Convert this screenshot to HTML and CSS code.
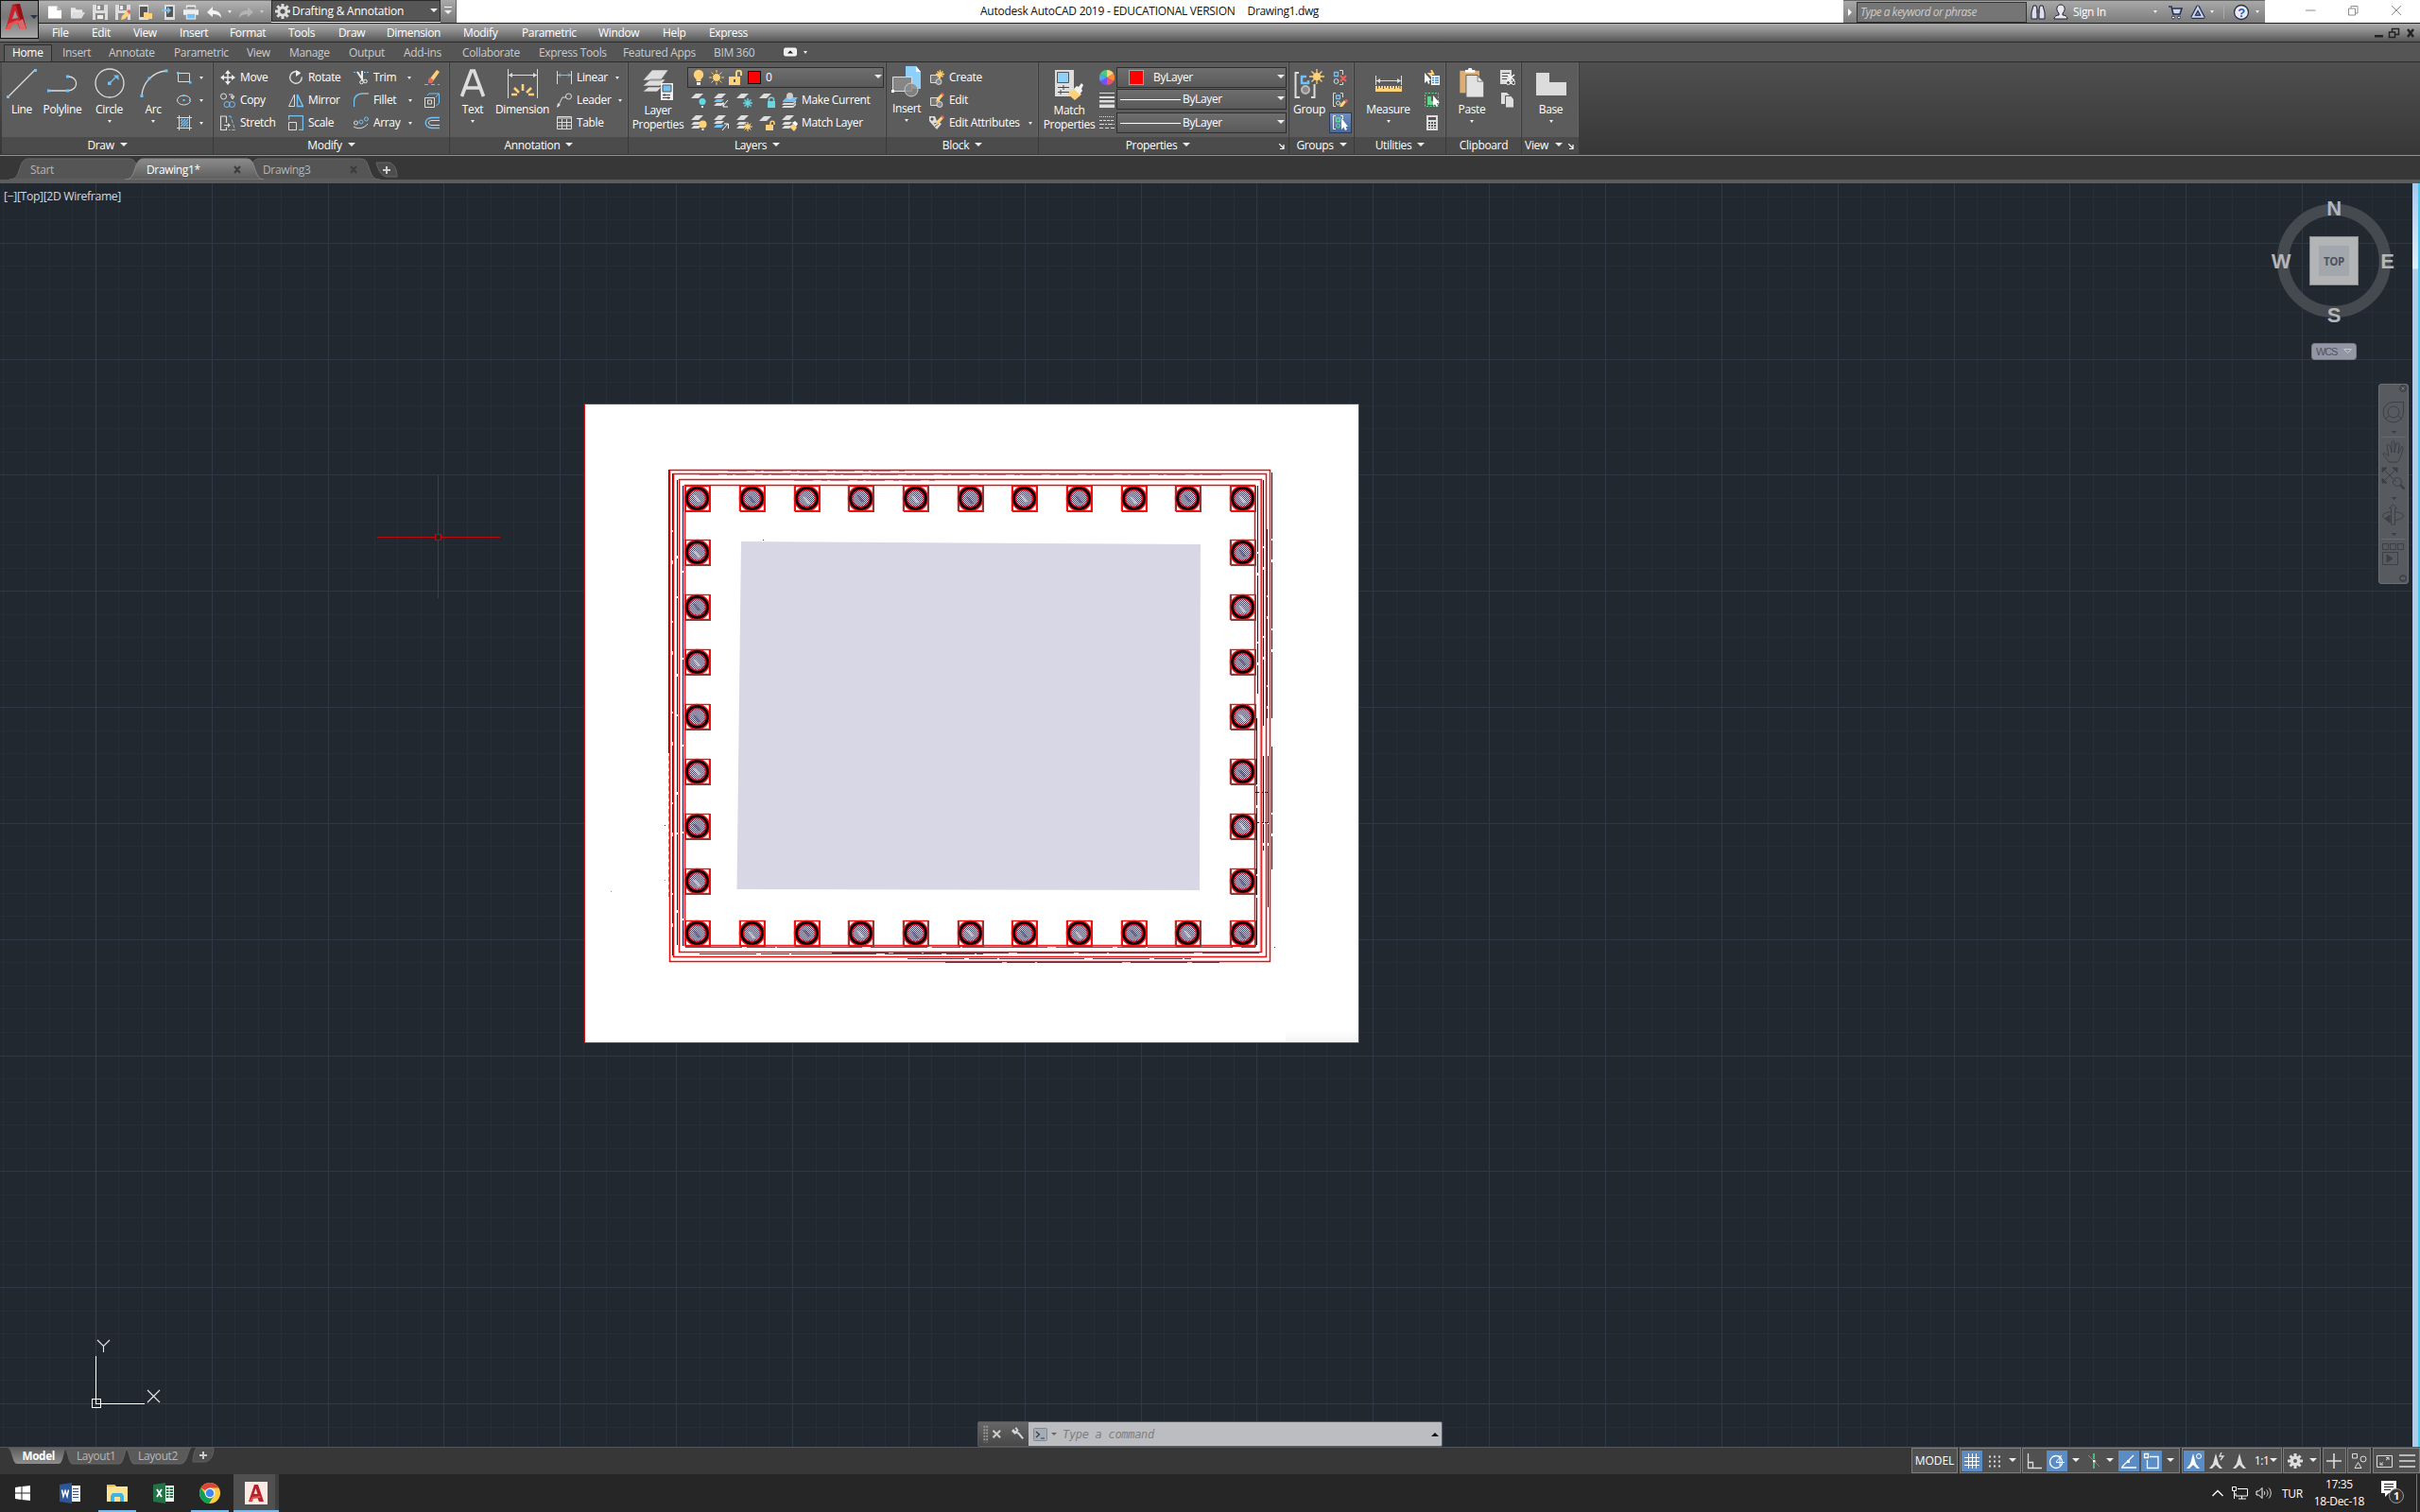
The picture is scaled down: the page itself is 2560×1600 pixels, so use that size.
FILE: index.html
```html
<!DOCTYPE html>
<html lang="en">
<head>
<meta charset="utf-8">
<title>Autodesk AutoCAD 2019 - Drawing1.dwg</title>
<link rel="stylesheet" href="styles.css">
</head>
<body>
<div class="app">
  <header class="top">
    <button class="appbtn">
      <svg width="24" height="30" viewBox="0 0 24 30"><path d="M1 28 8 2l8-1 7 27h-7l-3-8-6 1-1 7z" fill="#c8232c"/><path d="M8 2l8-1 7 27-4-2L12 3z" fill="#8f1219"/><path d="M8 17l3-9 3 8z" fill="#9b9b9b"/><path d="M1 28l3-6 10-4 2 3-8 2-2 5z" fill="#e2574f"/><path d="M16 28l-2-8 5-3 4 11z" fill="#d66"/></svg>
      <i class="caret navy"></i>
    </button>
    <div class="toprows">
      <div class="titlebar">
        <div class="qat">
          <svg width="16" height="16" viewBox="0 0 17 16"><path d="M1 1h10l5 5v9H1z" fill="#fff"/><path d="M11 1v5h5" fill="#aaa"/></svg>
          <svg width="16" height="16" viewBox="0 0 17 16"><path d="M1 15V3h5l1 2h7v3H5z" fill="#e8e8e8"/><path d="M5 8h12l-4 7H1z" fill="#ddd"/></svg>
          <svg width="16" height="16" viewBox="0 0 16 16"><path d="M0 0h16v16H0z" fill="#dcdcdc"/><path d="M4 0h8v6H4zM3 9h10v7H3z" fill="#8a8a8a"/><path d="M5 1h3v4H5zM5 11h6v4H5z" fill="#eee"/></svg>
          <svg width="16" height="16" viewBox="0 0 16 16"><path d="M0 0h16v16H0z" fill="#dcdcdc"/><path d="M4 0h8v6H4zM3 9h10v7H3z" fill="#8a8a8a"/><path d="M5 1h3v4H5z" fill="#eee"/><path d="M7 12l6-6 3 3-6 6-4 1z" fill="#ffd27a"/><path d="M12 7l2-2 2 1v3l-1 1z" fill="#f0605c"/></svg>
          <svg width="16" height="16" viewBox="0 0 16 16"><path d="M1 0h10v16H1z" fill="#ddd"/><path d="M2 2h8v11H2z" fill="#555"/><path d="M6 8h4l1 1h4v6H6z" fill="#ffd27a"/></svg>
          <svg width="16" height="16" viewBox="0 0 16 16"><path d="M4 0h11v16H4z" fill="#ddd"/><path d="M6 2h7v11H6z" fill="#555"/><path d="M1 5h6V2l4 4-4 4V7H1z" fill="#72c2f8"/></svg>
          <svg width="16" height="16" viewBox="0 0 17 16"><path d="M3 0h11v4H3zM0 5h17v6H0z" fill="#eee"/><path d="M4 2h9v2H4z" fill="#888"/><path d="M3 9h11v7H3z" fill="#eee"/><path d="M4 10h9v5H4z" fill="#72c2f8"/></svg>
          <svg width="17" height="16" viewBox="0 0 17 16"><path d="M7 2v4c6 0 9 3 9 8-2-3-4-4-9-4v3L1 8z" fill="#f2f2f2"/></svg>
          <i class="caret"></i>
          <svg width="17" height="16" viewBox="0 0 17 16"><path d="M10 2v4c-6 0-9 3-9 8 2-3 4-4 9-4v3l6-5z" fill="#b5b5b5"/></svg>
          <i class="caret dim"></i>
        </div>
        <div class="workspace">
          <svg width="16" height="16" viewBox="0 0 16 16"><circle cx="8" cy="8" r="4" fill="none" stroke="#ddd" stroke-width="3"/><path d="M8 0v16M0 8h16M2.3 2.3l11.4 11.4M13.700 2.300 2.300 13.700" stroke="#ddd" stroke-width="3"/><circle cx="8" cy="8" r="2.600" fill="#555"/></svg>
          <span>Drafting &amp; Annotation</span><i class="caret big"></i>
        </div>
        <div class="qatmore"><b></b><i class="caret big"></i></div>
        <div class="wintitle"><span>Autodesk AutoCAD 2019 - EDUCATIONAL VERSION</span><span>Drawing1.dwg</span></div>
        <div class="info">
          <i class="play"></i>
          <div class="search">Type a keyword or phrase</div>
          <svg class="bino" width="16" height="16" viewBox="0 0 16 16"><path d="M3 1h3l1 4v10H1V8zM10 1h3l2 7v7H9V5z" fill="#dde" stroke="#1d2330"/><path d="M6 5h4v4H6z" fill="#556"/></svg>
          <svg class="person" width="16" height="17" viewBox="0 0 16 17"><path d="M1 16c0-3 3-4 5-4v-2C2 6 4 1 8 1s6 5 2 9v2c2 0 5 1 5 4z" fill="#e8e8ee" stroke="#1d2330"/></svg>
          <span class="signin">Sign In</span><i class="caret"></i>
          <svg class="cart" width="16" height="16" viewBox="0 0 16 16"><path d="M1 2h3l2 8h7l2-6H5" fill="#d5d8e2" stroke="#223058" stroke-width="1.600"/><circle cx="6" cy="13.500" r="1.500" fill="#fff" stroke="#223058"/><circle cx="12" cy="13.500" r="1.500" fill="#fff" stroke="#223058"/></svg>
          <svg class="ax" width="16" height="16" viewBox="0 0 16 16"><path d="M8 2.500l5.500 10.500h-11z" fill="#dfe4f3" stroke="#223058" stroke-width="4" stroke-linejoin="round"/><path d="M8 3l5.200 9.800H2.800z" fill="none" stroke="#cdd5ee" stroke-width="2"/><path d="M8 7l2.500 4h-5z" fill="#8a8c92" stroke="#223058"/></svg>
          <i class="caret"></i><em></em>
          <svg class="help" width="18" height="18" viewBox="0 0 18 18"><circle cx="9" cy="9" r="7.500" fill="#e8ecf4" stroke="#2a3248" stroke-width="1.300"/><text x="9" y="13.500" text-anchor="middle" class="qm">?</text></svg>
          <i class="caret"></i>
        </div>
        <div class="winbtns"><svg width="102" height="12" viewBox="0 0 102 12"><path d="M0 6h10.500M45.500 4h7v7h-7zM48 4V1.500h7V9h-2.500M91 1l10 10M101 1 91 11" fill="none" stroke="#8c8c8c"/></svg></div>
      </div>
      <nav class="menubar">
        <span style="width:42px">File</span><span style="width:44px">Edit</span><span style="width:49px">View</span><span style="width:53px">Insert</span><span style="width:62px">Format</span><span style="width:53px">Tools</span><span style="width:51px">Draw</span><span style="width:81px">Dimension</span><span style="width:62px">Modify</span><span style="width:81px">Parametric</span><span style="width:68px">Window</span><span style="width:49px">Help</span><span>Express</span>
        <svg class="docbtns" width="44" height="12" viewBox="0 0 44 12"><path d="M0 8h9v2.500H0z" fill="#222"/><path d="M15.500 5h6v5.500h-6zM18.500 5V1.500h7V7.500h-4" fill="none" stroke="#222" stroke-width="1.500"/><path d="M35 2l6 8M41 2l-6 8" stroke="#222" stroke-width="2.500"/></svg>
      </nav>
    </div>
  </header>
  <nav class="rtabs">
    <span class="on">Home</span><span style="width:49px">Insert</span><span style="width:69px">Annotate</span><span style="width:77px">Parametric</span><span style="width:45px">View</span><span style="width:63px">Manage</span><span style="width:58px">Output</span><span style="width:62px">Add-ins</span><span style="width:81px">Collaborate</span><span style="width:89px">Express Tools</span><span style="width:96px">Featured Apps</span><span style="width:74px">BIM 360</span>
    <svg width="14" height="10" viewBox="0 0 14 10"><rect x=".5" y="1" width="13" height="8" rx="1.500" fill="#eee" stroke="#fff"/><path d="M4 6.500l3-3 3 3z" fill="#222"/></svg><i class="caret"></i>
  </nav>
  <section class="ribbon">
    <div class="panel p-draw">
      <div class="body">
        <div class="big"><svg width="32" height="32" viewBox="0 0 32 32"><path d="M2 30 30 2" stroke="#ddd" stroke-width="1.300"/><path d="M0 29h3v3H0zM29 1h3v3h-3z" fill="#72c2f8"/></svg><span>Line</span></div>
        <div class="big"><svg width="32" height="32" viewBox="0 0 32 32"><path d="M2 24h20c12-1 11-15 0-15" fill="none" stroke="#ddd" stroke-width="1.300"/><path d="M0 22.500h3v3H0zM20 22.500h3v3h-3zM20 7.500h3v3h-3z" fill="#72c2f8"/></svg><span>Polyline</span></div>
        <div class="big"><svg width="32" height="32" viewBox="0 0 32 32"><circle cx="16" cy="16" r="15" fill="none" stroke="#ddd" stroke-width="1.300"/><path d="M16 16l7-7" stroke="#72c2f8" stroke-width="1.300"/><path d="M14 14.500h3.500V18H14zM20 7.500h5.500V13z" fill="#72c2f8"/></svg><span>Circle</span><i class="caret"></i></div>
        <div class="big"><svg width="32" height="32" viewBox="0 0 32 32"><path d="M4 29C5 15 16 4 30 3" fill="none" stroke="#ddd" stroke-width="1.300"/><path d="M2.500 28h3v3h-3zM10.500 9.500h3v3h-3zM28.500 1.500h3v3h-3z" fill="#72c2f8"/></svg><span>Arc</span><i class="caret"></i></div>
        <b></b>
        <div class="sm"><svg width="16" height="16" viewBox="0 0 16 16"><path d="M1.500 3.500h12v9h-12z" fill="none" stroke="#ddd"/><path d="M0 2h2.500v2.500H0zM13 12h2.500v2.500H13z" fill="#72c2f8"/></svg><i class="caret"></i></div>
        <div class="sm"><svg width="16" height="16" viewBox="0 0 16 16"><ellipse cx="7.500" cy="8" rx="7" ry="5" fill="none" stroke="#ddd"/><path d="M6.500 2h2v2h-2zM6.500 7h2v2h-2zM13 7h2v2h-2z" fill="#72c2f8"/></svg><i class="caret"></i></div>
        <div class="sm"><svg width="16" height="16" viewBox="0 0 16 16"><path d="M0 2.500h16M0 13.500h16M2.500 0v16M13.500 0v16" stroke="#ddd"/><path d="M4 9l5-5M4 12l8-8M7 12l5-5M10 12l2-2M4 6l2-2" stroke="#72c2f8" stroke-width="1.300"/></svg><i class="caret"></i></div>
      </div>
      <div class="ptitle"><span>Draw</span><i class="caret big"></i></div>
    </div>
    <div class="panel p-modify">
      <div class="body">
        <div class="sm"><svg width="16" height="16" viewBox="0 0 16 16"><path d="M8 2v12M2 8h12" stroke="#eee" stroke-width="1.400"/><path d="M8 0l3 4H5zM8 16l3-4H5zM0 8l4-3v6zM16 8l-4-3v6z" fill="#eee"/></svg><span>Move</span></div>
        <div class="sm"><svg width="16" height="16" viewBox="0 0 16 16"><circle cx="3.500" cy="4" r="3" fill="none" stroke="#ddd"/><path d="M9 2h4v4M11 4l2 3 2-3z" fill="none" stroke="#ddd"/><circle cx="7" cy="12.500" r="3" fill="none" stroke="#72c2f8"/><circle cx="12.500" cy="12.500" r="3" fill="none" stroke="#72c2f8"/></svg><span>Copy</span></div>
        <div class="sm"><svg width="16" height="16" viewBox="0 0 16 16"><path d="M6.500 1v0h-6v14.500h6v-3M4 10.500h6M6.500 1v7" fill="none" stroke="#ddd" stroke-width="1.200"/><path d="M8 8l3 2.500L8 13z" fill="#ddd"/><path d="M9 1h2l4.500 14.500H9" fill="none" stroke="#72c2f8" stroke-dasharray="4 1.500"/></svg><span>Stretch</span></div>
        <div class="sm"><svg width="16" height="16" viewBox="0 0 16 16"><path d="M12.500 3.500a6.300 6.300 0 1 0 1.800 4" fill="none" stroke="#ddd" stroke-width="1.400"/><path d="M8 0l5 3.500L8 7z" fill="#eee"/></svg><span>Rotate</span></div>
        <div class="sm"><svg width="16" height="16" viewBox="0 0 16 16"><path d="M6.500 2v12.500h-6z" fill="none" stroke="#ddd"/><path d="M9.500 2v12.500h6z" fill="none" stroke="#72c2f8" stroke-width="1.500"/></svg><span>Mirror</span></div>
        <div class="sm"><svg width="16" height="16" viewBox="0 0 16 16"><path d="M.5 7.500h8v8h-8z" fill="none" stroke="#ddd"/><path d="M.5 5V.500h15v15H11" fill="none" stroke="#72c2f8" stroke-width="1.400"/></svg><span>Scale</span></div>
        <div class="sm" style="width:61px"><svg width="16" height="16" viewBox="0 0 16 16"><path d="M0 2.500h5M11 2.500h5" stroke="#72c2f8" stroke-dasharray="2 1"/><path d="M4 2l6 9M9 1v10" stroke="#eee" stroke-width="2"/><circle cx="8.500" cy="13" r="1.800" fill="none" stroke="#eee"/><circle cx="12.500" cy="12" r="1.800" fill="none" stroke="#eee"/></svg><span>Trim</span><i class="caret"></i></div>
        <div class="sm" style="width:62px"><svg width="16" height="16" viewBox="0 0 16 16"><path d="M.5 15V10C.5 5 3 1.500 9 1" fill="none" stroke="#72c2f8" stroke-width="1.300"/><path d="M9 1h7" stroke="#ddd"/></svg><span>Fillet</span><i class="caret"></i></div>
        <div class="sm" style="width:62px"><svg width="16" height="16" viewBox="0 0 16 16"><circle cx="2.500" cy="8" r="2" fill="none" stroke="#ddd"/><circle cx="8" cy="7" r="2" fill="none" stroke="#72c2f8"/><circle cx="13.500" cy="4" r="2" fill="none" stroke="#72c2f8"/><path d="M0 12c5 3 11 2 15-3" fill="none" stroke="#ddd"/></svg><span>Array</span><i class="caret"></i></div>
        <div class="sm"><svg width="16" height="16" viewBox="0 0 16 16"><path d="M6 9l7-9 3 2-7 10z" fill="#ffd27a"/><path d="M4 10l2-2 4 3-2 3H4z" fill="#f0605c"/><path d="M0 15.500h16" stroke="#72c2f8" stroke-dasharray="4 3"/></svg></div>
        <div class="sm"><svg width="16" height="16" viewBox="0 0 16 16"><path d="M.5 5.500h10v10H.5zM3.500 8h4v4h-4z" fill="none" stroke="#ddd"/><path d="M3 3l2-2h10.500v10l-3 3M12 5l3-4" fill="none" stroke="#72c2f8"/></svg></div>
        <div class="sm"><svg width="16" height="16" viewBox="0 0 16 16"><path d="M16 2.500H8C-1 3-1 13 8 13.500h8" fill="none" stroke="#72c2f8" stroke-width="1.400"/><path d="M16 5.500H8c-5 0-5 5 0 5h8" fill="none" stroke="#ddd"/></svg></div>
      </div>
      <div class="ptitle"><span>Modify</span><i class="caret big"></i></div>
    </div>
    <div class="panel p-anno">
      <div class="body">
        <div class="big"><svg width="32" height="32" viewBox="0 0 32 32"><path d="M4.500 30 14.500 3h3l10 27M8.500 21h15" fill="none" stroke="#ddd" stroke-width="3.600"/></svg><span>Text</span><i class="caret"></i></div>
        <div class="big"><svg width="32" height="32" viewBox="0 0 32 32"><path d="M.5 1v31M31.500 1v31M1 7.500h30" stroke="#ddd"/><path d="M1 7.500l4-2.500v5zM31 7.500l-4-2.500v5z" fill="#ddd"/><path d="M4 28h6M7 21l5 5M16 17v7M25 21l-5 5M28 28h-6" stroke="#ffd27a" stroke-width="2.600"/></svg><span>Dimension</span></div>
        <b></b>
        <div class="sm" style="width:66px"><svg width="16" height="16" viewBox="0 0 16 16"><path d="M.5 1v14M15.500 1v14" stroke="#ddd"/><path d="M1 5.500h14M4 3.500l-2 2 2 2M12 3.500l2 2-2 2" fill="none" stroke="#72c2f8"/></svg><span>Linear</span><i class="caret"></i></div>
        <div class="sm" style="width:69px"><svg width="16" height="16" viewBox="0 0 16 16"><path d="M1 15 6 5h4" fill="none" stroke="#ddd"/><circle cx="12.500" cy="4" r="3" fill="none" stroke="#ddd"/><path d="M0 16l1-5 3 2z" fill="#ddd"/></svg><span>Leader</span><i class="caret"></i></div>
        <div class="sm"><svg width="16" height="16" viewBox="0 0 16 16"><path d="M.5 1.500h15v13H.5zM0 3h16M0 7.500h16M0 11h16M5.500 4v11M10.500 4v11" fill="none" stroke="#ddd"/></svg><span>Table</span></div>
      </div>
      <div class="ptitle"><span>Annotation</span><i class="caret big"></i></div>
    </div>
    <div class="panel p-layers">
      <div class="body">
        <div class="big two"><svg width="32" height="34" viewBox="0 0 32 34"><path d="M0 24l6-5h14l-5 5zM0 18l8-7h16l-6 7zM0 12 10 1h17l-8 11z" fill="#ddd" stroke="#5c5c5c" stroke-width=".6"/><path d="M19 15h13v18H19z" fill="#f2f2f2"/><path d="M21 17h9v7h-9z" fill="#72c2f8" stroke="#555"/><path d="M21 27.500h8M21 30.500h8M23 26v3M27 29v3" stroke="#444"/></svg><span>Layer<br>Properties</span></div>
        <div class="combo layer">
          <svg width="12" height="18" viewBox="0 0 12 18"><circle cx="6" cy="6" r="5.200" fill="#ffd27a"/><path d="M3.500 9h5v4h-5z" fill="#ffd27a"/><path d="M4 14h4v3H4z" fill="#eee"/></svg>
          <svg width="16" height="16" viewBox="0 0 16 16"><path d="M8 0v16M0 8h16M2.500 2.500l11 11M13.500 2.500l-11 11" stroke="#ffd27a"/><circle cx="8" cy="8" r="4.500" fill="#ffd27a" stroke="#5c5c5c"/></svg>
          <svg width="15" height="17" viewBox="0 0 15 17"><path d="M0 7h12v9H0z" fill="#ffd27a"/><path d="M8 7V3c0-3 5-3 5 0v3" fill="none" stroke="#ffd27a" stroke-width="2"/><path d="M5 10h2v3H5z" fill="#555"/></svg>
          <i class="chip"></i><span>0</span><i class="caret big"></i>
        </div>
        <div class="lrow">
          <svg width="17" height="17" viewBox="0 0 17 17"><path d="M0 6l5-5h8L8 6z" fill="#ddd"/><circle cx="12" cy="9.500" r="3.500" fill="#65d8e4"/><path d="M11 14h2v2h-2z" fill="#eee"/></svg>
          <svg width="17" height="17" viewBox="0 0 17 17"><path d="M0 6l5-5h8L8 6zM0 14l3-3h8l-3 3z" fill="#ddd"/><path d="M0 10l3-3h8l-3 3z" fill="#72c2f8"/><path d="M15 8l-5 6M10 10v5h5" fill="none" stroke="#fff"/></svg>
          <svg width="17" height="17" viewBox="0 0 17 17"><path d="M0 6l5-5h8L8 6z" fill="#ddd"/><path d="M12 6v10M7 11h10M8.500 7.500l7 7M15.500 7.500l-7 7" stroke="#65d8e4" stroke-width="1.500"/></svg>
          <svg width="17" height="17" viewBox="0 0 17 17"><path d="M0 6l5-5h8L8 6z" fill="#ddd"/><path d="M9 9h8v7H9z" fill="#65d8e4"/><path d="M10.500 9V7c0-2.500 5-2.500 5 0v2" fill="none" stroke="#65d8e4" stroke-width="1.500"/></svg>
          <svg width="17" height="17" viewBox="0 0 17 17"><path d="M1 9l4-4h12l-4 5H1z" fill="#72c2f8"/><circle cx="8.500" cy="3.500" r="3.500" fill="#ccc"/><path d="M0 13l2-2h10l3-3v2l-3 3zM0 16l2-2h10l3-3v2l-3 3z" fill="#ddd"/></svg>
          <span>Make Current</span>
        </div>
        <div class="lrow">
          <svg width="17" height="17" viewBox="0 0 17 17"><path d="M0 5l5-5h8L8 5zM0 10l3-3h8l-3 3zM0 14l3-3h8l-3 3z" fill="#ddd"/><circle cx="12.500" cy="9.500" r="4" fill="#ffd27a"/><path d="M11.500 14h2v2h-2z" fill="#eee"/></svg>
          <svg width="17" height="17" viewBox="0 0 17 17"><path d="M0 5l5-5h8L8 5zM0 9l3-3h8L8 9z" fill="#ddd"/><path d="M0 13l3-3h8l-3 3z" fill="#72c2f8"/><path d="M9 16l6-7M11 9h4.500v5" fill="none" stroke="#fff"/></svg>
          <svg width="17" height="17" viewBox="0 0 17 17"><path d="M0 5l5-5h8L8 5zM0 10l3-3h8l-3 3zM0 14l3-3h8l-3 3z" fill="#ddd"/><path d="M12 7v10M7 12h10M8.500 8.500l7 7M15.500 8.500l-7 7" stroke="#ffd27a"/><circle cx="12" cy="12" r="2.800" fill="#ffd27a"/></svg>
          <svg width="17" height="17" viewBox="0 0 17 17"><path d="M0 6l5-5h8L8 6z" fill="#ddd"/><path d="M7 10h8v6H7z" fill="#ffd27a"/><path d="M12 10V8c0-2.500 4-2.500 4 0v2" fill="none" stroke="#ffd27a" stroke-width="1.500"/></svg>
          <svg width="17" height="17" viewBox="0 0 17 17"><path d="M0 5l5-5h8L8 5zM0 10l3-3h8l-3 3zM0 14l3-3h8l-3 3z" fill="#ddd"/><path d="M8 12l4-3 4 4-3 4z" fill="#ffd27a"/><path d="M11 8l3-2 3 3-2 3z" fill="#fff"/></svg>
          <span>Match Layer</span>
        </div>
      </div>
      <div class="ptitle"><span>Layers</span><i class="caret big"></i></div>
    </div>
    <div class="panel p-block">
      <div class="body">
        <div class="big raised"><svg width="34" height="34" viewBox="0 0 34 34"><path d="M16 0h11l5 6v18H16z" fill="#8fd0fb"/><path d="M27 0v6h5" fill="#fff"/><path d="M2.500 11.500h20v15h-20z" fill="#868686" stroke="#ddd"/><path d="M1 25h3v3H1z" fill="#fff"/><circle cx="22" cy="25" r="7" fill="#8a8a8a" fill-opacity=".8" stroke="#ccc"/></svg><span>Insert</span><i class="caret"></i></div>
        <b></b>
        <div class="sm"><svg width="16" height="16" viewBox="0 0 16 16"><path d="M1.500 5.500h9v8h-9z" fill="#777" stroke="#ddd"/><circle cx="10" cy="12.500" r="3" fill="#888" stroke="#ddd"/><path d="M11.500 0v9M7 4.500h9M8.500 1.500l6 6M14.500 1.500l-6 6" stroke="#ffd27a" stroke-width="1.300"/></svg><span>Create</span></div>
        <div class="sm"><svg width="16" height="16" viewBox="0 0 16 16"><path d="M1.500 5.500h9v8h-9z" fill="#777" stroke="#ddd"/><circle cx="11" cy="12.500" r="3" fill="#888" stroke="#ddd"/><path d="M7 10l1-4 5-5 2 2-5 6z" fill="#ffd27a"/><path d="M12 1l2-1 2 2-1 2z" fill="#f0605c"/></svg><span>Edit</span></div>
        <div class="sm" style="width:109px"><svg width="16" height="16" viewBox="0 0 16 16"><path d="M0 1h6l2 5 5 3-5 6-8-9z" fill="#ddd"/><path d="M2 3h2v2H2zM5 9l3-1M6 12l4-3" stroke="#555" fill="#555"/><path d="M7 10l1-4 5-5 2 2-5 6z" fill="#ffd27a"/><path d="M12 1l2-1 2 2-1 2z" fill="#f0605c"/></svg><span>Edit Attributes</span><i class="caret"></i></div>
      </div>
      <div class="ptitle"><span>Block</span><i class="caret big"></i></div>
    </div>
    <div class="panel p-props">
      <div class="body">
        <div class="big two"><svg width="32" height="34" viewBox="0 0 32 34"><path d="M1 1h20v28H1z" fill="#ddd"/><path d="M3.500 3.500h12v11h-12z" fill="#8fd0fb" stroke="#555"/><path d="M4 19.500h12M4 24.500h12M10 17v5M7 22v5" stroke="#444"/><path d="M14 26l9-6 6 7-7 6z" fill="#ffd27a"/><path d="M21 21l3-3 2 1 3-4 2 2-2 4 1 2-3 4z" fill="#f2f2f2"/></svg><span>Match<br>Properties</span></div>
        <div class="sm"><svg width="16" height="16" viewBox="0 0 16 16"><path d="M8 8V0a8 8 0 0 1 7 4z" fill="#ffd27a"/><path d="M8 8l7-4a8 8 0 0 1 0 8z" fill="#ff8a3c"/><path d="M8 8l7 4a8 8 0 0 1-7 4z" fill="#f0506a"/><path d="M8 8v8a8 8 0 0 1-7-4z" fill="#7b4dff"/><path d="M8 8l-7 4a8 8 0 0 1 0-8z" fill="#48a8f0"/><path d="M8 8 1 4a8 8 0 0 1 7-4z" fill="#52c87a"/></svg></div>
        <div class="sm"><svg width="16" height="16" viewBox="0 0 16 16"><path d="M0 0h16v1H0zM0 4h16v2H0zM0 8h16v2.500H0zM0 12.500h16V16H0z" fill="#ddd"/></svg></div>
        <div class="sm"><svg width="16" height="16" viewBox="0 0 16 16"><path d="M0 1.500h16" stroke="#ddd" stroke-dasharray="1 1"/><path d="M0 5.500h16" stroke="#ddd" stroke-dasharray="3 1"/><path d="M0 9.500h16" stroke="#ddd" stroke-dasharray="5 1 2 1"/><path d="M0 13.500h16" stroke="#ddd" stroke-dasharray="4 2"/></svg></div>
        <div class="combo color"><i class="chip"></i><span>ByLayer</span><i class="caret big"></i></div>
        <div class="combo line c2"><i class="rule"></i><span>ByLayer</span><i class="caret big"></i></div>
        <div class="combo line c3"><i class="rule"></i><span>ByLayer</span><i class="caret big"></i></div>
      </div>
      <div class="ptitle shift"><span>Properties</span><i class="caret big"></i><svg class="launch" width="6" height="6" viewBox="0 0 6 6"><path d="M0 0l5 5M5 1v4.500H1" fill="none" stroke="#fff" stroke-width="1.200"/></svg></div>
    </div>
    <div class="panel p-groups">
      <div class="body">
        <div class="big"><svg width="32" height="32" viewBox="0 0 32 32"><path d="M5 5H1.500v26H6M18 31h3.500V17" fill="none" stroke="#ddd" stroke-width="2"/><path d="M13 9H8v7h7v-3" fill="none" stroke="#72c2f8" stroke-width="2.500"/><circle cx="12" cy="23" r="4" fill="#888" stroke="#bbb" stroke-width="2"/><path d="M24 1v16M16 9h16M18.500 3.500l11 11M29.500 3.500l-11 11" stroke="#ffd27a" stroke-width="1.300"/><circle cx="24" cy="9" r="4" fill="#ffd27a"/></svg><span>Group</span></div>
        <div class="sm"><svg width="16" height="16" viewBox="0 0 16 16"><path d="M1.500 2.500h4v4h-4z" fill="none" stroke="#72c2f8" stroke-width="1.300"/><circle cx="3.500" cy="12" r="2.400" fill="none" stroke="#ddd"/><path d="M7 .5h3.500V5M7 15.500h3.500V13" fill="none" stroke="#ddd"/><path d="M8 6l6 6M14 6l-6 6" stroke="#f0605c" stroke-width="2"/></svg></div>
        <div class="sm"><svg width="16" height="16" viewBox="0 0 16 16"><path d="M3 .5H.5v14H3M8 .5h2.500V5" fill="none" stroke="#ddd"/><path d="M3.500 3h4v3.500h-4z" fill="none" stroke="#72c2f8" stroke-width="1.300"/><circle cx="5.500" cy="11" r="2" fill="none" stroke="#ddd"/><path d="M7 15l1-3 4-4 2 2-4 5z" fill="#ffd27a"/><path d="M12 8l3-1 1 2-2 2z" fill="#f0605c"/></svg></div>
        <div class="sm act"><svg width="16" height="18" viewBox="0 0 16 18"><path d="M3 1.500H.5v14H3M8 1.500h2.500V5" fill="none" stroke="#eee"/><path d="M3.500 4h4v3.500h-4z" fill="none" stroke="#5fe08a" stroke-width="1.300"/><circle cx="5.500" cy="12" r="2" fill="none" stroke="#5fe08a"/><path d="M9 4v12l2.500-2.500L13 17l2-1-1.500-3H16z" fill="#fff"/></svg></div>
      </div>
      <div class="ptitle"><span>Groups</span><i class="caret big"></i></div>
    </div>
    <div class="panel p-utils">
      <div class="body">
        <div class="big"><svg width="30" height="32" viewBox="0 0 30 32"><path d="M1.500 8v10M28.500 8v10M2 13.500h26" stroke="#ddd"/><path d="M2 13.500l4-2.500v5zM28 13.500l-4-2.500v5z" fill="#ddd"/><path d="M1 19h28v6H1z" fill="#ffd27a"/><path d="M3.500 19v3M6.500 19v2M9.500 19v3M12.500 19v2M15.500 19v3M18.500 19v2M21.500 19v3M24.500 19v2M27 19v3" stroke="#555"/></svg><span>Measure</span><i class="caret"></i></div>
        <div class="sm c"><svg width="16" height="16" viewBox="0 0 16 16"><path d="M7 0l2 4H5l4 4" stroke="#ffd27a" stroke-width="2" fill="none"/><path d="M0 3v11l2.500-2.500L4 15l1.500-1L4.500 11H7z" fill="#fff"/><path d="M7 6h9v10H7z" fill="#fff"/><path d="M8 8.500h2M11 8.500h4M8 11h2M11 11h4M8 13.500h2M11 13.500h4" stroke="#3a8ad0" stroke-width="1.300"/></svg></div>
        <div class="sm c"><svg width="16" height="16" viewBox="0 0 16 16"><path d="M.5.500h14v14H.5z" fill="none" stroke="#5fd88a" stroke-dasharray="2 1.500"/><path d="M3 4h4v5h5v4H3z" fill="#5fd88a"/><path d="M9 3v11l2-2 1.500 3 1.500-1-1-3h3z" fill="#fff"/></svg></div>
        <div class="sm c"><svg width="12" height="16" viewBox="0 0 12 16"><path d="M0 0h12v16H0z" fill="#ddd"/><path d="M2 2h8v3H2zM2 7h2v2H2zM5 7h2v2H5zM8 7h2v2H8zM2 10h2v2H2zM5 10h2v2H5zM8 10h2v2H8zM2 13h2v1H2zM5 13h2v1H5zM8 13h2v1H8z" fill="#555"/></svg></div>
      </div>
      <div class="ptitle"><span>Utilities</span><i class="caret big"></i></div>
    </div>
    <div class="panel p-clip">
      <div class="body">
        <div class="big"><svg width="27" height="32" viewBox="0 0 28 34"><path d="M0 3h22v25H0z" fill="#dcae74"/><path d="M6 5V2h3l1-2h3l1 2h3v3z" fill="#fff"/><path d="M7 8h13l7 8v17H7z" fill="#e2e2e2" stroke="#5c5c5c"/><path d="M20 9v6h6z" fill="#fff" stroke="#555" stroke-width=".8"/></svg><span>Paste</span><i class="caret"></i></div>
        <div class="sm c"><svg width="16" height="16" viewBox="0 0 16 16"><path d="M0 0h12v15H0z" fill="#ddd"/><path d="M2 3.500h8M2 6.500h6M2 9.500h5" stroke="#555"/><path d="M8 5l7 6M15 5l-7 6" stroke="#fff" stroke-width="1.500"/><circle cx="8.500" cy="13.500" r="2" fill="#555" stroke="#fff"/><circle cx="14" cy="13.500" r="2" fill="#555" stroke="#fff"/></svg></div>
        <div class="sm c"><svg width="16" height="16" viewBox="0 0 16 16"><path d="M1 0h6l3 3v9H1z" fill="#ddd"/><path d="M5.500 3.500h6l3 3.500v9h-9z" fill="#ddd" stroke="#5c5c5c"/></svg></div>
      </div>
      <div class="ptitle"><span>Clipboard</span></div>
    </div>
    <div class="panel p-view">
      <div class="body">
        <div class="big"><svg width="32" height="32" viewBox="0 0 32 32"><path d="M0 5h14v10h18v14H0z" fill="#dcdcdc"/></svg><span>Base</span><i class="caret"></i></div>
      </div>
      <div class="ptitle"><span>View</span><i class="caret big"></i><svg class="launch in" width="6" height="6" viewBox="0 0 6 6"><path d="M0 0l5 5M5 1v4.500H1" fill="none" stroke="#fff" stroke-width="1.200"/></svg></div>
    </div>
  </section>
  <nav class="ftabs">
    <svg class="tabshapes" width="440" height="25" viewBox="0 0 440 25">
      <defs><linearGradient id="ta" x2="0" y2="1"><stop offset="0" stop-color="#8c8c8c"/><stop offset="1" stop-color="#5c5c5c"/></linearGradient></defs>
      <path d="M10 25c8 0 9-6 12-15 2-5 4-7 8-7h106c6 0 7 3 9 9 3 9 5 13 10 13z" fill="#555" stroke="#686868"/>
      <path d="M254 25c8 0 9-6 12-15 2-5 4-7 8-7h107c6 0 7 3 9 9 3 9 5 13 12 13z" fill="#555" stroke="#686868"/>
      <path d="M132 25c8 0 9-6 12-15 2-5 4-7 8-7h108c6 0 7 3 9 9 3 9 5 13 10 13z" fill="url(#ta)" stroke="#888"/>
      <path d="M398 7h14c6 2 8 9 8 15h-11c-6-1-9-7-11-15z" fill="#4d4d4d" stroke="#666"/><path d="M405 15h8M409 11v8" stroke="#ccc" stroke-width="2"/>
      <path d="M248 11l6 7M254 11l-6 7M371 11l6 7M377 11l-6 7" stroke="#3c3c3c" stroke-width="2"/>
    </svg>
    <div class="tablabels"><span style="width:123px">Start</span><span class="on" style="width:123px">Drawing1*</span><span>Drawing3</span></div>
  </nav>
  <main class="view">
    <svg class="scene" width="2552" height="1337" viewBox="0 194 2552 1337">
      <defs>
        <pattern id="hatch" width="2" height="2" patternUnits="userSpaceOnUse"><path d="M0 0h2v2H0z" fill="#e4e2f2"/><path d="M0 0h1v1H0zM1 1h1v1H1z" fill="#3c3c56"/></pattern>
        <linearGradient id="fade" x1="0" x2="0" y1="0" y2="1"><stop offset="0" stop-color="#fff"/><stop offset="1" stop-color="#f3f4f6"/></linearGradient>
      </defs>
      <g id="grid" shape-rendering="crispEdges"></g>
      <path d="M101.500 194v1291" stroke="#1e5128" shape-rendering="crispEdges"/><path d="M101 1485.500h2451" stroke="#6a2329" shape-rendering="crispEdges"/>
      <rect x="619" y="427" width="818" height="676" fill="#fff"/>
      <rect x="1360" y="1090" width="77" height="13" fill="url(#fade)"/>
      <rect x="618.500" y="427.500" width="819" height="676" fill="none" stroke="#d81010" shape-rendering="crispEdges"/>
      <path d="M784 573l486 3-1 366-489.500-1z" fill="#d8d7e5"/>
      <g fill="none" stroke="#14141e" shape-rendering="crispEdges">
        <path d="M707.500 497v300"/><path d="M707.500 800v150" stroke="#99a" stroke-dasharray="5 3"/>
        <path d="M711.500 501v510" stroke-dasharray="60 2 30 4"/><path d="M716.500 508v492" stroke-dasharray="80 3 40 2"/><path d="M722.500 514v487" stroke="#14143a" stroke-dasharray="90 2"/>
        <path d="M770 498.500h190M840 508.500h150M740 502.500h560" stroke="#b9a0b0" stroke-dasharray="20 9 6 3"/>
        <path d="M1345.500 500v260M1345.500 790v130M1340.500 560v200M1341.500 800v160M1336.500 508v260M1336.500 800v100M1330.500 514v220M1329.500 760v240" stroke-dasharray="70 2 20 3"/>
        <path d="M725 1002.500h603M880 1008.500h455M740 1009.500h300M960 1014.500h300M1000 1018.500h290" stroke="#445" stroke-dasharray="60 5 30 2 90 9"/>
        <path d="M1328 838.500h15M1328 870.500h15" stroke-dasharray="4 1"/>
      </g>
      <g fill="none" stroke="#ee0c0c" stroke-width="1.500">
        <rect x="708.500" y="497.500" width="635" height="520"/><rect x="712.500" y="501.500" width="627" height="511"/><rect x="718.500" y="507.500" width="616" height="500"/><rect x="724.500" y="513.500" width="603" height="487"/>
        <path d="M1333.500 508v499M725 1001.500h603" stroke="#ff7070"/>
      </g>
      <g id="columns"></g>
      <path d="M807 571h1v1h-1zM703 873h1v1h-1zM1348 1002h1v1h-1z" fill="#333"/><path d="M703 931h1v1h-1zM646 943h1v1h-1z" fill="#999"/>
      <path d="M399 568.500h62M467 568.500h62M463.500 503v62M463.500 571v62M460.500 565.500h6v6h-6z" fill="none" stroke="#c00a0a" shape-rendering="crispEdges"/>
      <path d="M101.500 1435v50.500h51M97.500 1480.500h9v9h-9z" fill="none" stroke="#fff" shape-rendering="crispEdges"/>
      <path d="M103 1418l6.500 6.500 6.500-6.500M109.500 1424v7M156 1471l13 13M169 1471l-13 13" fill="none" stroke="#e8e8e8" stroke-width="1.100"/>
      <text x="4" y="212" class="vplabel" textLength="124" lengthAdjust="spacingAndGlyphs">[−][Top][2D Wireframe]</text>
      <circle cx="2469" cy="276" r="54" fill="none" stroke="#454a51" stroke-width="12.500"/>
      <g class="compass"><text x="2469" y="227.500">N</text><text x="2469" y="340.500">S</text><text x="2413" y="284">W</text><text x="2525.500" y="284">E</text></g>
      <rect x="2443.500" y="250.500" width="51" height="51" fill="#b3b4b6" stroke="#8a8c8e"/><rect x="2453" y="260" width="32" height="32" fill="#a2a7ad"/>
      <text x="2469" y="280.500" class="cube" textLength="22" lengthAdjust="spacingAndGlyphs">TOP</text>
      <rect x="2445.500" y="363.500" width="47" height="17" rx="3" fill="#9496a5" stroke="#7b7d8c"/><text x="2450" y="375.500" class="wcs" textLength="23">WCS</text><path d="M2479.500 369.500h8l-4 4z" fill="none" stroke="#c4c6d0"/>
      <g fill="none" stroke="#3c4046">
        <rect x="2516.500" y="406.500" width="31" height="211" rx="2.500" fill="#575b5f" stroke="#6b6f72"/>
        <circle cx="2542" cy="411" r="3.500" fill="#484c50"/><path d="M2540.500 409.500l3 3M2543.500 409.500l-3 3" stroke="#777"/>
        <path d="M2532 425.500h10.500v11a10.700 10.700 0 1 1-10.500-11z"/><circle cx="2532" cy="436" r="6"/><path d="M2527.500 440l-4 3M2536.500 440l4 3"/>
        <path d="M2529.500 456h6l-3 3zM2529.500 526h6l-3 3zM2529.500 564h6l-3 3z" fill="#3c4046" stroke="none"/>
        <path d="M2519 462.500h26M2519 570.500h26" stroke="#686c70"/>
        <path d="M2527 489c-2-4-6-7-6-9 2-1 4 1 6 3l-2-12c2-2 3 0 4 3l1 5v-11c1-2 3-2 3 0v11l2-10c2-1 3 0 3 1l-1 10 3-7c1-1 3 0 2 2-2 6-3 11-6 14z"/>
        <path d="M2521 496l14 14M2535 496l-14 14"/><path d="M2520 495h5l-5 5zM2536 495v5l-5-5zM2520 511v-5l5 5z" fill="#3c4046"/><circle cx="2536" cy="510" r="4.500"/><path d="M2539.500 513.500l4 4" stroke-width="2.500"/>
        <ellipse cx="2531.500" cy="546" rx="11" ry="4.500"/><path d="M2529.500 555v-17h-2l4-4.500 4 4.500h-2v17z" fill="#575b5f"/><path d="M2528 545l-5 4 5 4z" fill="#3c4046"/>
        <path d="M2520.500 575.500h6v6h-6zM2528.500 575.500h6v6h-6zM2536.500 575.500h6v6h-6zM2520.500 584.500h16v13h-16z"/><path d="M2525 587v8l6-4z" fill="#3c4046"/>
        <circle cx="2542" cy="612" r="3.500" fill="#484c50"/><path d="M2540 612h4" stroke="#777"/>
      </g>
    </svg>
    <div class="edge"></div>
    <div class="cmd">
      <div class="cmdleft">
        <svg width="54" height="25" viewBox="0 0 54 26"><path d="M5.500 4v18M8.500 4v18" stroke="#999" stroke-width="2" stroke-dasharray="2 1.500"/><path d="M15 9l8 8M23 9l-8 8" stroke="#ccc" stroke-width="2.200"/><path d="M37 8c2 4 4 4 6 4l5 6M36 9l3 3 3-3-2-3" fill="none" stroke="#d4d8dc" stroke-width="2"/></svg>
      </div>
      <svg width="27" height="16" viewBox="0 0 27 16"><rect x=".5" y="1.500" width="14" height="13" rx="1" fill="#a6acb6" stroke="#808896"/><path d="M3 5l3.500 3L3 11M8 12h4" fill="none" stroke="#333c48" stroke-width="1.200"/><path d="M19 6h6l-3 3z" fill="#666"/></svg>
      <span>Type a command</span><i class="uparrow"></i>
    </div>
  </main>
  <footer class="status">
    <svg class="ltabs" width="240" height="20" viewBox="0 0 240 20">
      <defs><linearGradient id="tb" x2="0" y2="1"><stop offset="0" stop-color="#5c5c5c"/><stop offset="1" stop-color="#8e8e8e"/></linearGradient></defs>
      <path d="M68 0c4 2 4 15 8 17h50c5 0 5-13 9-17zM133 0c4 2 4 15 8 17h50c7 0 7-13 11-17z" fill="#5a5a5a" stroke="#666"/>
      <path d="M8 0c5 2 5 17 10 17h44c5 0 5-13 8-17z" fill="url(#tb)"/>
      <path d="M208 0h18c0 8-3 14-9 15h-13c0-5 1-10 4-15z" fill="#505050" stroke="#606060"/><path d="M211 8h8M215 4v8" stroke="#ccc" stroke-width="2"/>
      <text x="23.500" y="12.500" class="lt on" textLength="34.500" lengthAdjust="spacingAndGlyphs">Model</text><text x="81" y="12.500" class="lt" textLength="41.500" lengthAdjust="spacingAndGlyphs">Layout1</text><text x="146" y="12.500" class="lt" textLength="42" lengthAdjust="spacingAndGlyphs">Layout2</text>
    </svg>
    <div class="sboxes">
      <div class="sb s-model"><span>MODEL</span></div>
      <div class="sb s-grid"><i class="t"><svg width="18" height="18" viewBox="0 0 18 18"><path d="M5.500 1v16M9.500 1v16M13.500 1v16M1 5.500h16M1 9.500h16M1 13.500h16" stroke="#fff"/></svg></i><svg class="ic" width="18" height="14" viewBox="0 0 18 14"><path d="M3 2.500h14M3 7.500h14M3 12.500h14" stroke="#ddd" stroke-width="2" stroke-dasharray="2 3"/></svg><u class="caret big"></u></div>
      <div class="sb s-draft"><svg width="16" height="18" viewBox="0 0 16 18"><path d="M1.500 1v15.500H16M2 10.500h4.500V16" fill="none" stroke="#ddd" stroke-width="1.300"/></svg><i class="t"><svg width="18" height="18" viewBox="0 0 18 18"><circle cx="8" cy="10" r="6.500" fill="none" stroke="#fff" stroke-width="1.300"/><path d="M8 10.500h9M8 10l6-7M12 3.500V14" fill="none" stroke="#fff"/></svg></i><u class="caret big"></u><svg width="16" height="16" viewBox="0 0 16 16"><path d="M2 2l12 12" stroke="#e86060"/><path d="M8 0v6M8 10v6" stroke="#50e080" stroke-width="1.500"/><path d="M7 7h2.500v2.500H7z" fill="#fff"/></svg><u class="caret big"></u><i class="t"><svg width="18" height="18" viewBox="0 0 18 18"><path d="M1 16h16M2 15 14 3" stroke="#fff" stroke-width="1.300"/><path d="M7 8h3v3H7z" fill="#fff"/></svg></i><i class="t"><svg width="18" height="18" viewBox="0 0 18 18"><path d="M7 4.500h9v12H4.500V8M1.500 1.500h4v4h-4z" fill="none" stroke="#fff" stroke-width="1.300"/></svg></i><u class="caret big"></u></div>
      <div class="sb s-anno"><i class="t"><svg width="18" height="18" viewBox="0 0 18 18"><path d="M8 1l3 11 4 5H12l-4-4-4 4H1l4-5z" fill="#fff"/><circle cx="14" cy="4" r="2.500" fill="none" stroke="#fff"/></svg></i><svg width="18" height="18" viewBox="0 0 18 18"><path d="M8 1l3 11 4 5H12l-4-4-4 4H1l4-5z" fill="#ddd"/><path d="M14 0l-2 4h4l-3 4" fill="none" stroke="#ddd" stroke-width="1.300"/></svg><svg width="16" height="18" viewBox="0 0 16 18"><path d="M8 1l3 11 4 5H12l-4-4-4 4H1l4-5z" fill="#ddd"/></svg><span>1:1</span><u class="caret big"></u></div>
      <div class="sb" style="width:40px"><svg width="16" height="16" viewBox="0 0 16 16"><path d="M8 0v16M0 8h16M2.500 2.500l11 11M13.500 2.500l-11 11" stroke="#ddd" stroke-width="3"/><circle cx="8" cy="8" r="5.300" fill="#ddd"/><circle cx="8" cy="8" r="2" fill="#555"/></svg><u class="caret big"></u></div>
      <div class="sb" style="width:25px"><svg width="16" height="16" viewBox="0 0 16 16"><path d="M8 0v16M0 8h16" stroke="#ddd" stroke-width="1.600"/></svg></div>
      <div class="sb" style="width:25px"><svg width="17" height="17" viewBox="0 0 17 17"><path d="M1.500 1.500h5v4.500h-5zM4 16.500l3.500-6 3.500 6z" fill="none" stroke="#ddd"/><circle cx="13" cy="7" r="3" fill="none" stroke="#ddd"/></svg></div>
      <div class="sb" style="width:50px"><svg width="17" height="14" viewBox="0 0 17 14"><path d="M.5 1.500h16v12H.5zM10 6l3-2.500M4 11l3-2.500M10 3.500h3V6M4 8.500V11h3" fill="none" stroke="#ddd"/></svg><svg width="17" height="16" viewBox="0 0 17 16"><path d="M0 2h17M0 8h17M0 14h17" stroke="#ddd" stroke-width="1.500"/></svg></div>
    </div>
  </footer>
  <footer class="taskbar">
    <div class="tasks">
      <div class="task" style="width:48px"><svg width="16" height="16" viewBox="0 0 16 16"><path d="M0 2l6.500-1v6.500H0zM7.500 1 16 0v7.500H7.500zM0 8.500h6.500V15L0 14zM7.500 8.500H16V16l-8.500-1z" fill="#fff"/></svg></div>
      <div class="task" style="width:54px"><svg width="22" height="22" viewBox="0 0 22 22"><path d="M12 3h10v17H12z" fill="#f4f4f4"/><path d="M14 6.500h6M14 9.500h6M14 12.500h6M14 15.500h6" stroke="#2b579a"/><path d="M0 2l13-2v22L0 20z" fill="#2b579a"/><path d="M2.500 7.500l1.500 7 2-6 2 6 1.500-7" fill="none" stroke="#fff" stroke-width="1.500"/></svg></div>
      <div class="task run" style="width:40px"><svg width="22" height="20" viewBox="0 0 22 20"><path d="M0 1h8l2 2h12v16H0z" fill="#ffe392"/><path d="M0 1h8l2 2H0z" fill="#f0b93a"/><path d="M4 19v-6l2-3h10l2 3v6h-4v-5H8v5z" fill="#3db4e6"/></svg></div>
      <div class="task" style="width:58px"><svg width="22" height="22" viewBox="0 0 22 22"><path d="M12 3h10v17H12z" fill="#f4f4f4"/><path d="M14 6h2.500M17.500 6H21M14 9h2.500M17.500 9H21M14 12h2.500M17.500 12H21M14 15h2.500M17.500 15H21" stroke="#217346" stroke-width="2"/><path d="M0 2l13-2v22L0 20z" fill="#217346"/><path d="M4 7l5 8M9 7l-5 8" stroke="#fff" stroke-width="1.800"/></svg></div>
      <div class="task run" style="width:40px"><svg width="22" height="22" viewBox="0 0 22 22"><circle cx="11" cy="11" r="11" fill="#ffcd40"/><path d="M11 11 1.500 5.500A11 11 0 0 1 20.500 5.500H11z" fill="#db4437"/><path d="M1.500 5.500A11 11 0 0 0 10 22l6-9-5 2-4-2z" fill="#0f9d58"/><circle cx="11" cy="11" r="5.400" fill="#fff"/><circle cx="11" cy="11" r="4.300" fill="#4285f4"/></svg></div>
      <div class="task run cad" style="width:48px"><svg width="24" height="24" viewBox="0 0 24 24"><path d="M0 0h24v24H0z" fill="#fbe9e4"/><path d="M4 21 10 3h4l6 18h-5l-2-5H9l-1 5z" fill="#b8202a"/><path d="M9.500 13l2-6 2 6z" fill="#f5d8d2"/><path d="M5 20l3-4 8-1 1 2-8 1-2 3z" fill="#e0564e"/></svg></div>
    </div>
    <div class="tray">
      <svg width="14" height="8" viewBox="0 0 14 8"><path d="M1.500 7 7 1.500 12.500 7" fill="none" stroke="#fff" stroke-width="1.300"/></svg>
      <svg width="17" height="14" viewBox="0 0 17 14"><path d="M6 2.500h10.500v7.500H4V7M7 13h8M10.500 10v3M.5.500h4v4h-4zM2.500 5v8" fill="none" stroke="#fff"/></svg>
      <svg width="18" height="14" viewBox="0 0 18 14"><path d="M1 5h2.500L7 1.500v11L3.500 9H1z" fill="none" stroke="#fff"/><path d="M9 5c1 1 1 3 0 4M11.500 3.500c2 2 2 5 0 7M14 1.500c3 3 3 8 0 11" fill="none" stroke="#ddd"/></svg>
      <span class="lang">TUR</span>
      <div class="clock"><span>17:35</span><span>18-Dec-18</span></div>
      <svg class="note" width="26" height="28" viewBox="0 0 26 28"><path d="M1 1h16v13H9l-4 4v-4H1z" fill="#fff"/><path d="M4 4.500h10M4 7.500h10M4 10.500h7" stroke="#262626"/><circle cx="17" cy="17" r="7.500" fill="#333" stroke="#999"/><text x="17" y="21" text-anchor="middle" class="badge">1</text></svg>
    </div>
  </footer>
</div>
<script src="scene.js"></script>
</body>
</html>
```
FILE: styles.css
```css
*{box-sizing:border-box}
body{margin:0;background:#212830;font:12px "Open Sans","Noto Sans",sans-serif;letter-spacing:-.35px;color:#fff;overflow:hidden}
svg{display:block;flex:none}
button{font:inherit;border:0;padding:0}
.app{width:2560px;height:1600px;display:flex;flex-direction:column}
.caret{display:block;flex:none;width:0;height:0;border:2.5px solid transparent;border-top:3.5px solid #eee;border-bottom:0}
.caret.big{border-width:4px 4px 0}
.caret.dim{border-top-color:#ccc}
.caret.navy{border-width:4px 4px 0;border-top-color:#2b3444}

.top{display:flex;height:45px;flex:none;background:#707070;border-bottom:1px solid #2c2c2c}
.appbtn{width:41px;height:41px;display:flex;align-items:center;gap:3px;padding-left:4px;padding-bottom:6px;background:linear-gradient(#8a8a8a,#777 45%,#aaa);border:1px solid #111;flex:none}
.toprows{flex:1;display:flex;flex-direction:column}
.titlebar{height:24px;display:flex;background:#fff}
.qat{width:246px;display:flex;align-items:center;padding-left:9px;gap:8px;background:linear-gradient(#b2b2b2,#7e7e7e);border-top:1px solid #777}
.qat .caret{margin-left:-2px;margin-right:-1px}
.workspace{width:179px;display:flex;align-items:center;background:#565656;border:1px solid #2a2a2a;padding:0 2px 0 3px;height:23px}
.workspace span{margin-left:2px;flex:1;letter-spacing:-.22px}
.qatmore{width:17px;background:linear-gradient(#aaa,#777);display:flex;flex-direction:column;align-items:center;justify-content:center;gap:3px;border-right:1px solid #666}
.qatmore b{width:8px;height:1px;background:#fff}
.wintitle{flex:1;color:#111;padding-left:554px;display:flex;gap:13px;line-height:24px;letter-spacing:-.26px}
.wintitle span:last-child{letter-spacing:-.35px}
.info{width:446px;display:flex;align-items:center;background:linear-gradient(#a8a8a8,#7c7c7c);border-top:1px solid #666}
.play{border:4px solid transparent;border-left:4px solid #fff;border-right:0;margin-left:5px}
.search{margin-left:5px;width:180px;height:22px;background:#757575;border:1px solid #333;line-height:20px;padding-left:3px;font-style:italic;color:#ccc;letter-spacing:-.55px}
.bino{margin-left:4px}
.person{margin-left:8px}
.signin{margin-left:5px;width:85px}
.cart{margin-left:11px}
.ax{margin-left:8px}
.ax + .caret{margin-left:5px}
.info em{width:1px;height:14px;background:#aaa;margin-left:10px}
.help{margin-left:9px;margin-right:6px}
.qm{font:bold 13px "Liberation Sans",sans-serif;fill:#2a55b8}
.winbtns{width:164px;padding:5px 0 0 43px}
.menubar{height:21px;display:flex;align-items:center;padding-left:14px;background:linear-gradient(#a9a9a9,#8c8c8c 40%,#565656);border-top:1px solid #222;line-height:19px}
.docbtns{margin-left:auto;margin-right:4px}

.rtabs{height:21px;flex:none;display:flex;align-items:center;background:#555;color:#ccc;border-bottom:1px solid #2c2c2c;padding-left:4px;line-height:20px}
.rtabs span{padding-top:1px}
.rtabs .on{align-self:flex-end;width:51px;margin-right:11px;height:18px;line-height:16px;padding:0 0 0 8px;color:#fff;background:#606060;border:1px solid #2c2c2c;border-bottom:0}
.rtabs .caret{margin-left:7px}
.ribbon{height:99px;flex:none;display:flex;background:linear-gradient(#4f4f4f,#373737);border-bottom:1px solid #929292;padding-left:2px}
.panel{display:flex;flex-direction:column;height:97px;border-right:1px solid #3a3a3a;box-shadow:inset -1px 0 #666;background:#5c5c5c}
.body{display:grid;grid-template-rows:24px 24px 24px;grid-auto-flow:column;padding-top:4px;height:79px}
.ptitle{position:relative;height:18px;background:#4b4b4b;display:flex;align-items:center;justify-content:center;gap:6px;padding-bottom:1px}
.ptitle.shift{padding-right:12px}
.launch{position:absolute;right:4px;top:7px}
.launch.in{right:5px}
.p-view .ptitle{padding-right:14px;gap:7px}
.big{grid-row:1/4;display:flex;flex-direction:column;align-items:center;padding-top:2px}
.big span{line-height:15px;margin-top:4px;text-align:center;white-space:nowrap}
.big .caret{margin-top:4px}
.two{padding-top:3px}
.two span{margin-top:2px}
.raised{padding-top:0}
.raised span{margin-top:3px}
.body>b{grid-row:1/4}
.sm{display:flex;align-items:center;gap:5px;white-space:nowrap}
.sm span,.lrow span{padding-bottom:1px}
.sm .caret{margin-left:auto}
.sm.c{justify-content:center}
.p-draw{width:224px}
.p-draw .body{grid-template-columns:42px 44px 55px 38px 6px 38px}
.p-draw .sm .caret{margin-left:3px}
.p-modify{width:250px}
.p-modify .body{grid-template-columns:72px 69px 75px 20px;padding-left:7px}
.p-anno{width:189px}
.p-anno .body{grid-template-columns:48px 57px 8px 71px}
.p-layers{width:273px}
.p-layers .body{grid-template-columns:62px 208px}
.p-block{width:161px}
.p-block .body{grid-template-columns:42px 3px 112px}
.p-props{width:265px}
.p-props .body{grid-template-columns:64px 18px 180px}
.p-groups{width:69px}
.p-groups .body{grid-template-columns:42px 24px}
.p-utils{width:97px}
.p-utils .body{grid-template-columns:71px 22px}
.p-clip{width:80px}
.p-clip .body{grid-template-columns:54px 22px}
.p-view{width:61px}
.p-view .body{grid-template-columns:61px}
.combo{display:flex;align-items:center;height:22px;background:linear-gradient(#6e6e6e,#5a5a5a);border:1px solid #2e2e2e;align-self:center}
.combo span{padding-bottom:1px}
.combo .caret{margin-left:auto;margin-right:1px}
.layer{padding-left:5px;gap:5px}
.chip{width:14px;height:14px;background:#f00;border:1px solid #111}
.color .chip{width:16px;height:16px;margin-left:12px;margin-right:10px;border-color:#aaa}
.rule{width:64px;height:1px;background:#fff;margin:0 2px 0 3px}
.c2{align-self:start}
.lrow{display:flex;align-items:center;gap:7px;padding-left:4px}
.lrow span{margin-left:-3px}
.act{background:linear-gradient(#6e8fc0,#4a689c);border:1px solid #28395c;height:22px;align-self:center;padding-left:3px}
.p-groups .sm:not(.act){padding-left:4px}

.ftabs{height:29px;flex:none;background:#373737;border-bottom:4px solid #5c5c5c;display:grid}
.tabshapes,.tablabels{grid-area:1/1}
.tablabels{padding-left:32px;display:flex;line-height:29px;color:#b4b4b4}
.tablabels .on{color:#fff}

.view{height:1337px;flex:none;display:flex;position:relative}
.edge{width:8px;background:linear-gradient(#a9c8ee,#e2eefb 90px,#b3cde9 91px);border-right:2px solid #4cc8ec}
.vplabel{font:12px "Open Sans",sans-serif;fill:#d8d8d8}
.compass text{font:bold 22px "Liberation Sans",sans-serif;fill:#b4b6b8;text-anchor:middle}
.cube{font:bold 12px "Open Sans",sans-serif;fill:#4c525c;text-anchor:middle}
.wcs{font:11px "Liberation Sans",sans-serif;fill:#50525c}
.cmd{position:absolute;left:1034px;top:1310px;width:492px;height:27px;display:flex;align-items:center;background:#bcbdc0;border:1px solid #55585c;border-radius:2px}
.cmdleft{width:53px;height:25px;background:linear-gradient(#666,#474747);margin-right:5px}
.cmd span{font:italic 12px "DejaVu Sans Mono",monospace;color:#7c7d80;margin-left:4px;letter-spacing:-.3px}
.uparrow{margin-left:auto;border:4px solid transparent;border-bottom:4px solid #111;border-top:0;margin-right:3px}

.status{height:29px;flex:none;background:#373737;border-top:1px solid #565656;display:flex;justify-content:space-between}
.lt{font:12px "Open Sans",sans-serif;fill:#b8b8b8}
.lt.on{font-weight:bold;fill:#fff}
.sboxes{display:flex;width:538px;justify-content:space-between;padding-bottom:1px}
.sb{height:27px;background:#515151;border:1px solid #7c7c7c;display:flex;align-items:center;justify-content:space-around}
.sb span{padding-bottom:1px}
.sb .t{width:22px;height:22px;background:#5b8cc4;display:grid;place-items:center;flex:none}
.s-model{width:49px;letter-spacing:-.1px}
.s-grid,.s-draft,.s-anno{justify-content:flex-start}
.s-grid{width:65px;padding-left:1px}
.s-grid svg.ic{margin-left:4px}
.s-grid .caret{margin-left:6px}
.s-draft{width:167px;padding-left:4px}
.s-draft .t{margin-left:5px}
.s-draft .caret{margin-left:5px}
.s-draft .caret + svg{margin-left:7px}
.s-draft .t + .t{margin-left:2px}
.s-anno{width:106px;padding-left:1px}
.s-anno .t + svg{margin-left:4px}
.s-anno svg + svg{margin-left:7px}
.s-anno span{margin-left:8px;width:15px}
.s-anno .caret{margin-left:1px}

.taskbar{height:40px;flex:none;background:#262626;display:flex;justify-content:space-between}
.tasks{display:flex}
.task{display:grid;place-items:center;border-bottom:2px solid transparent;padding-top:1px}
.run{border-bottom-color:#76b9ed}
.task:nth-child(2){padding-right:6px}
.task:nth-child(1){margin-right:2px}
.cad{background:#505050;margin-left:5px;box-shadow:inset -4px 0 #3e3e3e}
.cad svg{margin-right:1px}
.tray{display:flex;align-items:center;gap:8px;border-right:1px solid #777;margin-right:3px;padding-right:12px}
.lang{margin-left:2px}
.clock{display:flex;flex-direction:column;align-items:center;line-height:18px;margin-left:4px;margin-right:9px;padding-bottom:1px}
.badge{font:bold 11px "Open Sans",sans-serif;fill:#fff}
```
FILE: scene.js
```js
// Grid lines are generated around the drawing origin, every fifth line is a major one.
var NS = 'http://www.w3.org/2000/svg';
function add(parent, name, attrs) {
  var el = document.createElementNS(NS, name);
  for (var k in attrs) el.setAttribute(k, attrs[k]);
  parent.appendChild(el);
  return el;
}
var grid = document.getElementById('grid');
var minor = '', major = '';
for (var i = -5; i < 100; i++) {
  var x = Math.floor(101.3 + i * 24.572) + 0.5;
  if (x > 0 && x < 2552) { var v = 'M' + x + ' 194V1531'; if (i % 5) minor += v; else major += v; }
}
for (var j = -2; j < 54; j++) {
  var y = Math.floor(1485.5 - j * 24.564) + 0.5;
  if (y > 194 && y < 1531) { var h = 'M0 ' + y + 'H2552'; if (j % 5) minor += h; else major += h; }
}
add(grid, 'path', { d: minor, stroke: '#272e39', fill: 'none' });
add(grid, 'path', { d: major, stroke: '#303745', fill: 'none' });

// Colonnade: 11 columns along the long sides, 9 along the short ones.
var cols = document.getElementById('columns');
var ys = [514, 571, 629, 687, 745, 803, 861, 919, 974];
function column(x, y, n) {
  var mx = x + 13.5, my = y + 13.5;
  add(cols, 'rect', { x: x + 1.5, y: y + 0.5, width: 26, height: 27, fill: '#fff', stroke: '#555', 'shape-rendering': 'crispEdges' });
  add(cols, 'circle', { cx: mx, cy: my, r: 9, fill: 'url(#hatch)' });
  add(cols, 'path', { d: 'M' + (mx - 5) + ' ' + (my - 4 + n % 3) + 'l4 1 5 6-3 1z', fill: n % 2 ? '#3a3860' : '#ffffff', opacity: 0.45 });
  add(cols, 'circle', { cx: mx, cy: my, r: 11, fill: 'none', stroke: '#050505', 'stroke-width': 4 });
  add(cols, 'circle', { cx: mx, cy: my, r: 9, fill: 'none', stroke: '#f01020', 'stroke-width': 1.4 });
  add(cols, 'circle', { cx: mx, cy: my, r: 13.1, fill: 'none', stroke: '#f01010', 'stroke-width': 1.3 });
  add(cols, 'rect', { x: x + 0.5, y: y + 0.5, width: 26, height: 26, fill: 'none', stroke: '#f01010', 'stroke-width': 1.4 });
}
for (var c = 0; c < 11; c++) {
  var cx = Math.round(724.3 + c * 57.66);
  column(cx, ys[0], c);
  column(cx, ys[8], c + 1);
}
for (var r = 1; r < 8; r++) {
  column(724, ys[r], r + 1);
  column(1301, ys[r], r);
}
```
